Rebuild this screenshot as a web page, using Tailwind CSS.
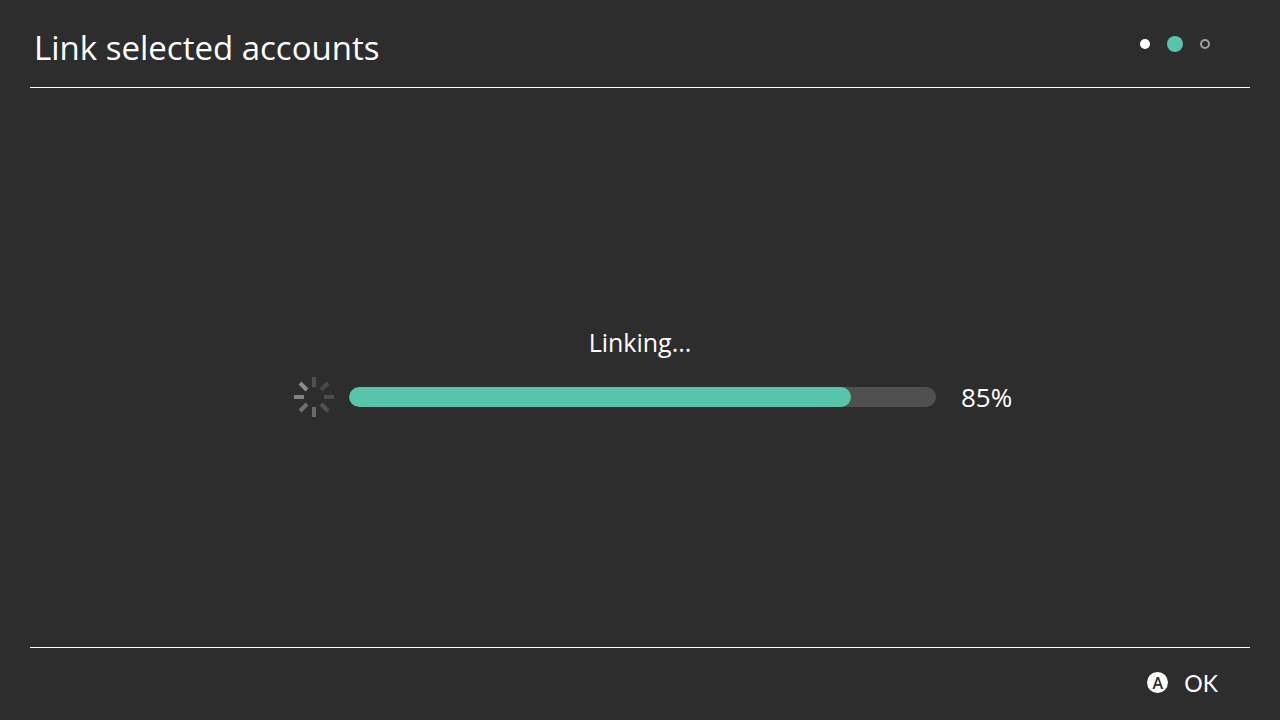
<!DOCTYPE html>
<html lang="en">
<head>
<meta charset="utf-8">
<meta name="viewport" content="width=device-width, initial-scale=1">
<title>Link selected accounts</title>
<script src="https://cdn.jsdelivr.net/npm/@tailwindcss/browser@4"></script>
</head>
<body class="min-h-screen flex flex-col px-[30px] bg-[#2d2d2d] text-white font-['Open_Sans','Noto_Sans',sans-serif]">
<header class="h-22 flex items-center justify-between border-b border-white pl-1 pr-[37px]">
  <h1 class="text-[33px] leading-10 pt-2">Link selected accounts</h1>
  <ol class="flex items-center gap-[14px]" aria-label="Step 2 of 3">
    <li class="size-4 flex items-center justify-center"><span class="size-[10px] rounded-full bg-white"></span></li>
    <li class="size-4 rounded-full bg-[#58c4aa]" aria-current="step"></li>
    <li class="size-4 flex items-center justify-center"><span class="size-[10px] rounded-full border-2 border-[#a0a0a0]"></span></li>
  </ol>
</header>
<main class="grow flex flex-col items-center justify-center gap-[19px] pt-2">
  <label for="progress" class="text-[25px] leading-8">Linking...</label>
  <div class="w-full flex items-center pl-[264px] pr-[237px]">
    <svg class="size-10 mr-[15px] shrink-0" viewBox="0 0 40 40" stroke-width="4" fill="none" aria-hidden="true">
      <path d="M20 0v10" stroke="#505050"/>
      <path d="M27 13l7-7" stroke="#494949"/>
      <path d="M30 20h10" stroke="#4d4d4d"/>
      <path d="M27 27l7 7" stroke="#535353"/>
      <path d="M20 30v10" stroke="#6a6a6a"/>
      <path d="M13 27l-7 7" stroke="#707070"/>
      <path d="M0 20h10" stroke="#828282"/>
      <path d="M13 13l-7-7" stroke="#8b8b8b"/>
    </svg>
    <progress id="progress" value="85.5" max="100" class="grow min-w-0 h-5 appearance-none rounded-full overflow-hidden bg-[#505050] [&::-webkit-progress-bar]:bg-[#505050] [&::-webkit-progress-bar]:rounded-full [&::-webkit-progress-value]:bg-[#58c4aa] [&::-webkit-progress-value]:rounded-full">85%</progress>
    <span class="text-[26px] leading-10 ml-[25px] w-[52px] shrink-0">85%</span>
  </div>
</main>
<footer class="h-[73px] border-t border-white flex justify-end items-center pr-8 pb-[3px]">
  <button type="button" class="flex items-center gap-4 font-['Lato','Open_Sans',sans-serif] text-[23px] leading-8">
    <span class="size-[21px] rounded-full bg-white text-[#2d2d2d] flex items-center justify-center font-['Open_Sans',sans-serif] text-base leading-5 font-semibold" aria-hidden="true">A</span>
    OK
  </button>
</footer>
</body>
</html>
